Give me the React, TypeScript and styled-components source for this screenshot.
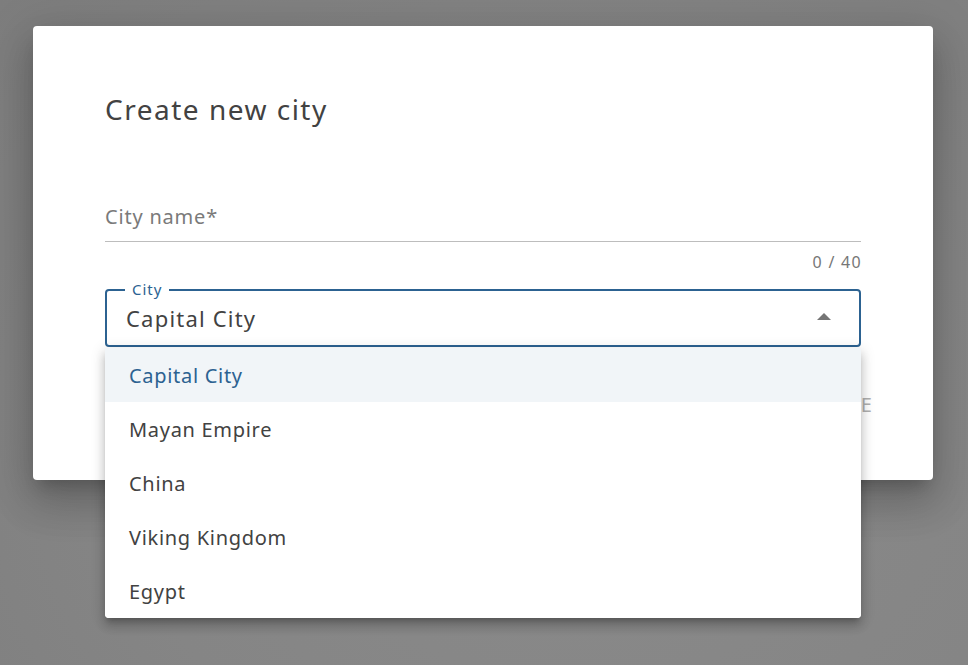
import React from "react";
import styled, { createGlobalStyle } from "styled-components";

const GlobalStyle = createGlobalStyle`
  html, body {
    margin: 0;
    padding: 0;
    height: 100%;
  }
  body {
    background: #858585;
    font-family: "Noto Sans", "Open Sans", sans-serif;
    color: #424242;
    overflow: hidden;
  }
  #root {
    min-height: 100%;
  }
`;

const Backdrop = styled.div`
  width: 968px;
  height: 665px;
  box-sizing: border-box;
  padding: 26px 0 0 33px;
  background: radial-gradient(ellipse at 60% 70%, #8a8a8a 0%, #858585 55%, #7d7d7d 100%);
`;

const Dialog = styled.div`
  width: 900px;
  box-sizing: border-box;
  background: #ffffff;
  border-radius: 4px;
  box-shadow: 0 11px 15px -7px rgba(0, 0, 0, 0.2), 0 24px 38px 3px rgba(0, 0, 0, 0.14),
    0 9px 46px 8px rgba(0, 0, 0, 0.12);
  padding: 65px 0 55px;
  display: flex;
  flex-direction: column;
`;

const Content = styled.div`
  padding: 0 72px;
  display: flex;
  flex-direction: column;
`;

const Title = styled.h2`
  margin: 0;
  font-size: 28px;
  line-height: 36px;
  font-weight: 400;
  letter-spacing: 1.5px;
  color: #424242;
`;

const TextField = styled.div`
  margin-top: 66px;
  display: flex;
  flex-direction: column;
`;

const InputBox = styled.div`
  height: 48px;
  box-sizing: content-box;
  border-bottom: 1px solid #bdbdbd;
  display: flex;
  align-items: flex-end;
`;

const Placeholder = styled.span`
  font-size: 20px;
  line-height: 32px;
  padding-bottom: 8px;
  letter-spacing: 0.8px;
  color: #7a7a7a;
`;

const Helper = styled.div`
  margin-top: 10px;
  font-size: 16px;
  line-height: 20px;
  letter-spacing: 1.3px;
  color: #767676;
  text-align: right;
  margin-right: -1px;
`;

const SelectWrap = styled.div`
  position: relative;
  margin-top: 17px;
`;

const SelectBox = styled.div`
  height: 58px;
  box-sizing: border-box;
  border: 2px solid #2c6291;
  border-radius: 4px;
  display: flex;
  align-items: center;
  padding: 0 28px 0 19px;
`;

const FloatLabel = styled.span`
  position: absolute;
  top: -10px;
  left: 20px;
  padding: 0 7px;
  background: #ffffff;
  font-size: 15px;
  line-height: 20px;
  letter-spacing: 1px;
  color: #2c6291;
`;

const SelectValue = styled.span`
  flex: 1;
  font-size: 22px;
  line-height: 54px;
  letter-spacing: 1.2px;
  color: #424242;
`;

const Arrow = styled.svg`
  width: 14px;
  height: 7px;
  margin-top: -4px;
  fill: #757575;
`;

const Menu = styled.ul`
  position: absolute;
  top: calc(100% + 1px);
  left: 0;
  right: 0;
  margin: 0;
  padding: 0;
  list-style: none;
  background: #ffffff;
  border-radius: 0 0 4px 4px;
  box-shadow: 0 5px 5px -3px rgba(0, 0, 0, 0.2), 0 8px 10px 1px rgba(0, 0, 0, 0.14),
    0 3px 14px 2px rgba(0, 0, 0, 0.12);
  z-index: 2;
  overflow: hidden;
`;

const MenuItem = styled.li<{ $selected?: boolean }>`
  height: 54px;
  box-sizing: border-box;
  padding: 2px 24px 0;
  display: flex;
  align-items: center;
  font-size: 20px;
  line-height: 28px;
  letter-spacing: 0.7px;
  color: ${(p) => (p.$selected ? "#2c6291" : "#424242")};
  background: ${(p) => (p.$selected ? "#f1f5f8" : "#ffffff")};
`;

const Actions = styled.div`
  margin-top: 38px;
  padding: 0 48px;
  display: flex;
  justify-content: flex-end;
  gap: 8px;
`;

const Button = styled.button<{ $disabled?: boolean }>`
  border: none;
  background: transparent;
  font-family: inherit;
  font-size: 20px;
  line-height: 24px;
  padding: 8px 12px;
  letter-spacing: 1px;
  text-transform: uppercase;
  color: ${(p) => (p.$disabled ? "#b0b0b0" : "#2c6291")};
`;

const options = ["Capital City", "Mayan Empire", "China", "Viking Kingdom", "Egypt"];

export default function App() {
  return (
    <>
      <GlobalStyle />
      <Backdrop>
        <Dialog>
          <Content>
            <Title>Create new city</Title>
            <TextField>
              <InputBox>
                <Placeholder>City name*</Placeholder>
              </InputBox>
              <Helper>0 / 40</Helper>
            </TextField>
            <SelectWrap>
              <SelectBox>
                <FloatLabel>City</FloatLabel>
                <SelectValue>Capital City</SelectValue>
                <Arrow viewBox="0 0 14 7">
                  <path d="M0 7 L7 0 L14 7 Z" />
                </Arrow>
              </SelectBox>
              <Menu>
                {options.map((o, i) => (
                  <MenuItem key={o} $selected={i === 0}>
                    {o}
                  </MenuItem>
                ))}
              </Menu>
            </SelectWrap>
          </Content>
          <Actions>
            <Button>Cancel</Button>
            <Button $disabled>Create</Button>
          </Actions>
        </Dialog>
      </Backdrop>
    </>
  );
}
